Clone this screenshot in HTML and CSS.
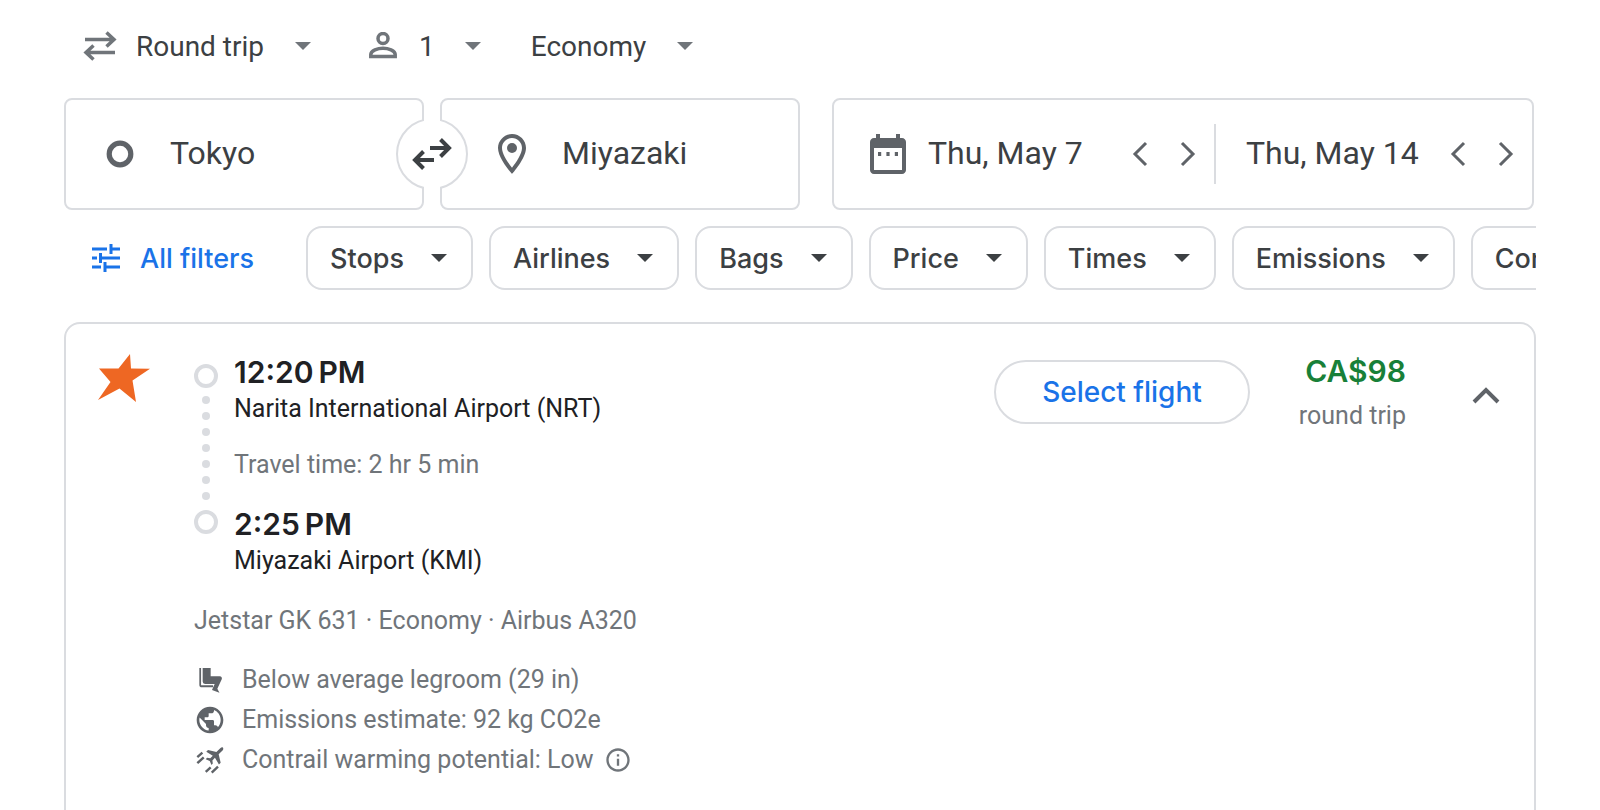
FILE: index.html
```html
<!DOCTYPE html>
<html lang="en">
<head>
    <meta charset="UTF-8">
    <meta name="viewport" content="width=device-width, initial-scale=1.0">
    <title>Flights - Tokyo to Miyazaki</title>
    <link rel="stylesheet" href="styles.css">
</head>
<body>
    <main class="page">
        <form class="search">
            <div class="trip-options">
                <div class="option">
                    <svg class="option-icon" viewBox="0 0 40 40"><path d="M5 13.500H34M26.500 6.500l7.500 7-7.500 7M35 26.500H6M13.500 19.500l-7.500 7 7.500 7"/></svg>
                    <select class="option-select" aria-label="Trip type">
                        <option>Round trip</option>
                    </select>
                    <svg class="caret" viewBox="0 0 16 8"><path d="M0 0h16L8 8z"/></svg>
                </div>
                <button type="button" class="option passengers" aria-label="1 passenger">
                    <svg class="person-icon" viewBox="0 0 28 28"><circle cx="14" cy="6.500" r="5"/><path d="M1.800 24.500v-2c0-4 7-6.300 12.200-6.300s12.200 2.300 12.200 6.300v2z"/></svg>
                    <span>1</span>
                    <svg class="caret" viewBox="0 0 16 8"><path d="M0 0h16L8 8z"/></svg>
                </button>
                <div class="option">
                    <select class="option-select" aria-label="Seating class">
                        <option>Economy</option>
                    </select>
                    <svg class="caret" viewBox="0 0 16 8"><path d="M0 0h16L8 8z"/></svg>
                </div>
            </div>

            <div class="fields">
                <div class="route">
                    <div class="place">
                        <svg class="field-icon" viewBox="0 0 24 24"><circle cx="12" cy="12" r="5.400" fill="none" stroke="#5f6368" stroke-width="2.600"/></svg>
                        <input type="text" class="field-input" aria-label="Where from?" value="Tokyo">
                    </div>
                    <button type="button" class="swap" aria-label="Swap origin and destination">
                        <svg viewBox="0 0 40 32"><path d="M18 10h19M28.500 1.500L37 10l-8.500 8.500M22 22H3M11.500 13.500L3 22l8.500 8.500"/></svg>
                    </button>
                    <div class="place destination">
                        <svg class="field-icon" viewBox="0 0 24 24"><path d="M12 2C8.130 2 5 5.130 5 9c0 5.250 7 13 7 13s7-7.750 7-13c0-3.870-3.130-7-7-7zM7 9c0-2.760 2.240-5 5-5s5 2.240 5 5c0 2.880-2.880 7.190-5 9.880C9.920 16.210 7 11.850 7 9z"/><circle cx="12" cy="9" r="2.500"/></svg>
                        <input type="text" class="field-input" aria-label="Where to?" value="Miyazaki">
                    </div>
                </div>

                <div class="dates">
                    <svg class="field-icon" viewBox="0 0 24 24"><path d="M7 11h1.600v2H7zM11.200 11h1.600v2h-1.600zM15.400 11H17v2h-1.600z"/><path d="M19 4h-1V2h-2v2H8V2H6v2H5c-1.110 0-2 .9-2 2v14c0 1.100.89 2 2 2h14c1.100 0 2-.9 2-2V6c0-1.100-.9-2-2-2zm0 16H5V9h14z"/></svg>
                    <input type="text" class="field-input departure" aria-label="Departure" value="Thu, May 7">
                    <button type="button" class="step" aria-label="Previous departure day"><svg viewBox="0 0 16 26"><path d="M14 2L3 13l11 11"/></svg></button>
                    <button type="button" class="step" aria-label="Next departure day"><svg viewBox="0 0 16 26"><path d="M2 2l11 11L2 24"/></svg></button>
                    <span class="divider"></span>
                    <input type="text" class="field-input" aria-label="Return" value="Thu, May 14">
                    <button type="button" class="step" aria-label="Previous return day"><svg viewBox="0 0 16 26"><path d="M14 2L3 13l11 11"/></svg></button>
                    <button type="button" class="step" aria-label="Next return day"><svg viewBox="0 0 16 26"><path d="M2 2l11 11L2 24"/></svg></button>
                </div>
            </div>
        </form>

        <div class="filters">
            <button type="button" class="all-filters">
                <svg viewBox="0 0 28 28"><path d="M0 5h15M19 5h9M19 0v10M0 14h5M9 14h19M8.500 9v10M0 23h9M13 23h15M13 18v10"/></svg>
                All filters
            </button>
            <button type="button" class="chip">Stops <svg class="caret" viewBox="0 0 16 8"><path d="M0 0h16L8 8z"/></svg></button>
            <button type="button" class="chip">Airlines <svg class="caret" viewBox="0 0 16 8"><path d="M0 0h16L8 8z"/></svg></button>
            <button type="button" class="chip">Bags <svg class="caret" viewBox="0 0 16 8"><path d="M0 0h16L8 8z"/></svg></button>
            <button type="button" class="chip">Price <svg class="caret" viewBox="0 0 16 8"><path d="M0 0h16L8 8z"/></svg></button>
            <button type="button" class="chip">Times <svg class="caret" viewBox="0 0 16 8"><path d="M0 0h16L8 8z"/></svg></button>
            <button type="button" class="chip">Emissions <svg class="caret" viewBox="0 0 16 8"><path d="M0 0h16L8 8z"/></svg></button>
            <button type="button" class="chip">Connecting airports <svg class="caret" viewBox="0 0 16 8"><path d="M0 0h16L8 8z"/></svg></button>
        </div>

        <section class="flight">
            <svg class="airline-logo" viewBox="0 0 52 48"><path d="M32 0l1 14.500 19 .3-17.500 11.700L38 48 21.500 34.500 0 46l12.500-18L1 14.500h19.500z"/></svg>

            <div class="details">
                <div class="legs">
                    <div class="track">
                        <span class="stop"></span>
                        <span class="dot"></span>
                        <span class="dot"></span>
                        <span class="dot"></span>
                        <span class="dot"></span>
                        <span class="dot"></span>
                        <span class="dot"></span>
                        <span class="dot"></span>
                        <span class="stop"></span>
                    </div>
                    <div>
                        <p class="time">12:20&#8239;PM</p>
                        <p class="airport">Narita International Airport (NRT)</p>
                        <p class="duration">Travel time: 2 hr 5 min</p>
                        <p class="time">2:25&#8239;PM</p>
                        <p class="airport">Miyazaki Airport (KMI)</p>
                    </div>
                </div>

                <p class="plane">Jetstar GK 631 · Economy · Airbus A320</p>

                <ul class="features">
                    <li>
                        <svg viewBox="0 0 24 24"><path d="M4 3h1.300v13h9v1.500H6A2 2 0 0 1 4 15.500z"/><path d="M6.500 3h6v6.200h6.800c1.300 0 2 1.200 1.500 2.300l-3.300 7 1.600 3-5.600-2 2-4.500H8.300A1.800 1.800 0 0 1 6.500 13.200z"/></svg>
                        Below average legroom (29 in)
                    </li>
                    <li>
                        <svg viewBox="0 0 24 24"><path d="M12 2C6.480 2 2 6.480 2 12s4.480 10 10 10 10-4.480 10-10S17.520 2 12 2zm-1 17.930c-3.950-.49-7-3.850-7-7.930 0-.62.080-1.210.21-1.790L9 15v1c0 1.100.9 2 2 2v1.930zm6.900-2.540c-.26-.81-1-1.390-1.900-1.390h-1v-3c0-.55-.45-1-1-1H8v-2h2c.55 0 1-.45 1-1V7h2c1.100 0 2-.9 2-2v-.41c2.930 1.190 5 4.060 5 7.410 0 2.080-.8 3.970-2.100 5.390z"/></svg>
                        Emissions estimate: 92 kg CO2e
                    </li>
                    <li>
                        <svg viewBox="0 0 24 24"><path d="M21.600 2.600c.6.700.4 1.600-.2 2.200l-2.900 2.900 1.500 6.300-1.300 1.300-3-4.900-1.900 1.900.3 2.400-1 1-1.300-3-3-1.300 1-1 2.400.3 1.900-1.900-4.900-3 1.300-1.300 6.300 1.500 2.900-2.900c.6-.6 1.500-.8 1.900-.5z"/><path d="M2.500 9.900l3.800-3.400M2.500 14.400L7.300 10M8.800 20.900l3.700-3.400M13.300 21.400L18 17" fill="none" stroke="#5f6368" stroke-width="1.800"/></svg>
                        Contrail warming potential: Low
                        <button type="button" class="info" aria-label="More about contrails"><svg viewBox="0 0 24 24"><path d="M11 7h2v2h-2zm0 4h2v6h-2zm1-9C6.480 2 2 6.480 2 12s4.480 10 10 10 10-4.480 10-10S17.520 2 12 2zm0 18c-4.410 0-8-3.590-8-8s3.590-8 8-8 8 3.590 8 8-3.590 8-8 8z"/></svg></button>
                    </li>
                </ul>
            </div>

            <button type="button" class="select-flight">Select flight</button>

            <div class="price">
                <p class="amount">CA$98</p>
                <p class="fare-type">round trip</p>
            </div>

            <button type="button" class="collapse" aria-label="Hide flight details"><svg viewBox="0 0 28 18"><path d="M2 16L14 4l12 12"/></svg></button>
        </section>
    </main>
</body>
</html>
```
FILE: styles.css
```css
* {
    box-sizing: border-box;
}
body {
    margin: 0;
    background: #fff;
    color: #3c4043;
    font-family: Roboto, Arial, sans-serif;
    font-size: 28px;
}
p, ul {
    margin: 0;
    padding: 0;
}
svg {
    display: block;
    flex: none;
}
button, input, select {
    font: inherit;
    color: inherit;
    background: none;
    border: none;
    margin: 0;
    padding: 0;
}
button, select {
    cursor: pointer;
}
.page {
    height: 100vh;
    padding: 0 64px;
    overflow: hidden;
}
.caret {
    width: 16px;
    height: 8px;
    fill: currentColor;
}

/* trip type, passengers, class */
.trip-options {
    display: flex;
    align-items: center;
    height: 98px;
    padding: 0 0 6px 16px;
    gap: 50px;
}
.option {
    display: flex;
    align-items: center;
}
.option .caret {
    margin-left: 30px;
    color: #70757a;
}
.option-select {
    appearance: none;
}
.option-icon {
    width: 40px;
    height: 40px;
    margin-right: 16px;
    fill: none;
    stroke: #70757a;
    stroke-width: 3.5;
}
.passengers {
    margin-left: 8px;
}
.person-icon {
    width: 28px;
    height: 28px;
    margin-right: 22px;
    fill: none;
    stroke: #70757a;
    stroke-width: 3.5;
}

/* search fields */
.fields {
    display: grid;
    grid-template-columns: minmax(0, 368fr) minmax(0, 351fr);
    gap: 32px;
    padding-right: 2px;
}
.route {
    position: relative;
    display: grid;
    grid-template-columns: 1fr 1fr;
    gap: 16px;
}
.place, .dates {
    display: flex;
    align-items: center;
    min-width: 0;
    height: 112px;
    border: 2px solid #dadce0;
    border-radius: 8px;
    font-size: 32px;
}
.place {
    gap: 26px;
    padding-left: 30px;
}
.destination {
    padding-left: 46px;
}
.field-icon {
    width: 48px;
    height: 48px;
    fill: #5f6368;
}
.field-input {
    flex: 1;
    width: 0;
    min-width: 0;
    padding-bottom: 2px;
}
.swap {
    position: absolute;
    top: 20px;
    left: calc(50% - 36px);
    display: flex;
    align-items: center;
    justify-content: center;
    width: 72px;
    height: 72px;
    border: 2px solid #dadce0;
    border-radius: 50%;
    background: #fff;
}
/* hides the ring between the two boxes */
.swap::before {
    content: "";
    position: absolute;
    top: -4px;
    bottom: -4px;
    left: 26px;
    width: 16px;
    background: #fff;
}
.swap svg {
    position: relative;
    width: 40px;
    height: 32px;
    fill: none;
    stroke: #3c4043;
    stroke-width: 4;
}
.dates {
    padding: 0 2px 0 30px;
}
.departure {
    margin-left: 16px;
}
.step {
    display: flex;
    align-items: center;
    justify-content: center;
    width: 48px;
    height: 48px;
}
.step svg {
    width: 16px;
    height: 26px;
    fill: none;
    stroke: #5f6368;
    stroke-width: 3;
}
.divider {
    width: 2px;
    height: 60px;
    margin: 0 30px 0 2px;
    background: #dadce0;
}

/* filter chips */
.filters {
    display: flex;
    gap: 16px;
    margin-top: 16px;
    overflow: hidden;
    font-family: "Google Sans", Inter, Roboto, sans-serif;
    font-size: 27px;
    font-weight: 500;
}
.filters button {
    display: flex;
    flex: none;
    align-items: center;
    height: 64px;
    white-space: nowrap;
}
.all-filters {
    gap: 20px;
    padding: 0 36px 0 28px;
    color: #1a73e8;
}
.all-filters svg {
    width: 28px;
    height: 28px;
    fill: none;
    stroke: #1a73e8;
    stroke-width: 3;
}
.filters .chip {
    gap: 27px;
    padding: 0 24px 0 22px;
    border: 2px solid #dadce0;
    border-radius: 16px;
}

/* flight card */
.flight {
    display: flex;
    align-items: flex-start;
    min-height: 520px;
    margin-top: 32px;
    padding: 0 34px 0 32px;
    border: 2px solid #dadce0;
    border-radius: 16px;
    color: #70757a;
    font-size: 25px;
    line-height: 36px;
}
.airline-logo {
    width: 52px;
    height: 48px;
    margin-top: 30px;
    fill: #ee6723;
}
.details {
    flex: 1;
    margin: 29px 0 0 44px;
}
.legs {
    display: flex;
    gap: 16px;
}
.track {
    display: flex;
    flex-direction: column;
    align-items: center;
    gap: 8px;
    padding-top: 11px;
}
.stop {
    width: 24px;
    height: 24px;
    border: 4px solid #dadce0;
    border-radius: 50%;
}
.dot + .stop {
    margin-top: 2px;
}
.dot {
    width: 8px;
    height: 8px;
    border-radius: 50%;
    background: #dadce0;
}
.time, .amount {
    font-family: "Google Sans", Inter, Roboto, sans-serif;
    font-size: 30px;
    font-weight: 600;
    line-height: 38px;
}
.time, .airport {
    color: #202124;
}
.duration {
    margin: 20px 0 22px;
}
.plane {
    margin-top: 24px;
}
.features {
    margin-top: 21px;
    list-style: none;
}
.features li {
    display: flex;
    align-items: center;
    height: 40px;
    gap: 16px;
}
.features svg {
    width: 32px;
    height: 32px;
    fill: #5f6368;
}
.features .info svg {
    width: 28px;
    height: 28px;
    fill: #70757a;
}
.info {
    margin-left: -6px;
}
.select-flight {
    width: 256px;
    height: 64px;
    margin-top: 36px;
    border: 2px solid #dadce0;
    border-radius: 32px;
    color: #1a73e8;
    font-family: "Google Sans", Inter, Roboto, sans-serif;
    font-size: 28px;
    font-weight: 500;
}
.price {
    width: 156px;
    margin-top: 28px;
    text-align: right;
}
.amount {
    color: #188038;
}
.fare-type {
    margin-top: 8px;
}
.collapse {
    margin: 62px 0 0 66px;
}
.collapse svg {
    width: 28px;
    height: 18px;
    fill: none;
    stroke: #5f6368;
    stroke-width: 4;
}
```
